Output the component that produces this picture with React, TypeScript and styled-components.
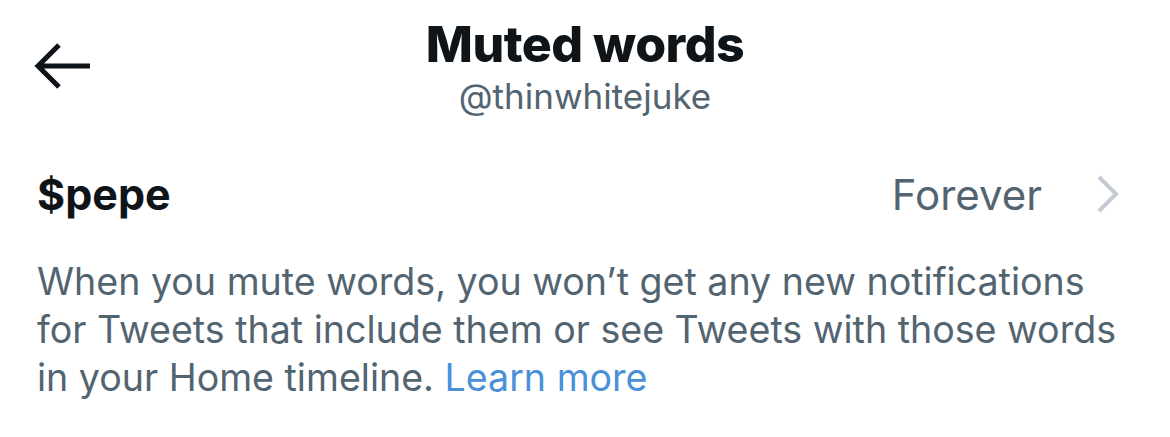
import styled, { createGlobalStyle } from "styled-components";

const GlobalStyle = createGlobalStyle`
  html, body {
    margin: 0;
    padding: 0;
    background: #ffffff;
    font-family: Inter, "Noto Sans", "Liberation Sans", sans-serif;
  }
`;

const Page = styled.main`
  width: 1170px;
  height: 437px;
  background: #ffffff;
  overflow: hidden;
`;

const Header = styled.header`
  position: relative;
  height: 130px;
  display: flex;
  flex-direction: column;
  align-items: center;
  padding-top: 14px;
  box-sizing: border-box;
`;

const BackButton = styled.button`
  position: absolute;
  left: 30px;
  top: 38px;
  width: 64px;
  height: 56px;
  border: none;
  background: none;
  padding: 0;
  display: flex;
  align-items: center;
  justify-content: center;
  cursor: pointer;
`;

const Title = styled.h1`
  margin: 0;
  font-size: 50px;
  line-height: 60px;
  font-weight: 800;
  color: #0f1419;
  letter-spacing: -0.5px;
`;

const Handle = styled.div`
  font-size: 35px;
  line-height: 44px;
  color: #536471;
`;

const WordRow = styled.div`
  display: flex;
  align-items: center;
  justify-content: space-between;
  padding: 0 51px 0 37px;
  height: 128px;
`;

const Word = styled.span`
  font-size: 43px;
  font-weight: 700;
  color: #0f1419;
`;

const Duration = styled.div`
  display: flex;
  align-items: center;
  gap: 55px;
  font-size: 42px;
  color: #536471;
`;

const Note = styled.p`
  margin: 0;
  padding: 0 40px 0 37px;
  font-size: 37.6px;
  line-height: 48px;
  color: #536471;
`;

const Link = styled.a`
  color: #4a90d9;
  text-decoration: none;
`;

export default function App() {
  return (
    <Page>
      <GlobalStyle />
      <Header>
        <BackButton aria-label="Back">
          <svg width="56" height="48" viewBox="0 0 56 48" fill="none">
            <path d="M4 24 H56 M25 3 L4 24 L25 45" stroke="#0f1419" strokeWidth="5" strokeLinejoin="miter" />
          </svg>
        </BackButton>
        <Title>Muted words</Title>
        <Handle>@thinwhitejuke</Handle>
      </Header>
      <WordRow>
        <Word>$pepe</Word>
        <Duration>
          Forever
          <svg width="22" height="38" viewBox="0 0 22 38" fill="none">
            <path d="M2 2 L19 19 L2 36" stroke="#c4cbd2" strokeWidth="4" />
          </svg>
        </Duration>
      </WordRow>
      <Note>
        When you mute words, you won’t get any new notifications for Tweets that include them or see Tweets with those words in your Home timeline. <Link href="#">Learn more</Link>
      </Note>
    </Page>
  );
}
